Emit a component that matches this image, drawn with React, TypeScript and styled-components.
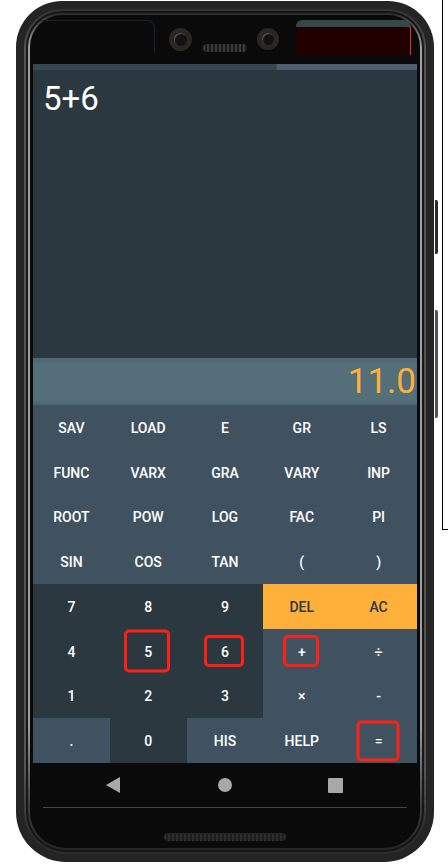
import styled, { createGlobalStyle } from 'styled-components';

const GlobalStyle = createGlobalStyle`
    html, body {
        margin: 0;
        padding: 0;
        background: #ffffff;
        overflow: hidden;
        font-family: Roboto, "Liberation Sans", sans-serif;
    }
`;

const Page = styled.div`
    position: relative;
    width: 448px;
    height: 864px;
    box-sizing: border-box;
    padding: 1px 14px 2px 16px;
`;

// thin black outline that sticks out on the right of the device
const PageEdge = styled.div`
    position: absolute;
    right: 0;
    top: 0;
    width: 5px;
    height: 529px;
    border-left: 1px solid #000;
    border-bottom: 1px solid #000;
`;

// the device frame: nested rings
const PhoneShell = styled.div`
    position: relative;
    height: 100%;
    box-sizing: border-box;
    padding: 8px;
    border-radius: 46px 46px 50px 50px;
    background: #242424;
`;

const SideButton = styled.div<{ $top: number; $height: number; $light?: boolean }>`
    position: absolute;
    right: -4px;
    top: ${p => p.$top}px;
    width: 3px;
    height: ${p => p.$height}px;
    border-radius: 0 2px 2px 0;
    background: ${p => (p.$light ? '#555555' : '#2c2c2c')};
`;

const Groove = styled.div`
    height: 100%;
    box-sizing: border-box;
    padding: 2px;
    border-radius: 38px 38px 42px 42px;
    background: linear-gradient(180deg, #333 0, #555 5%, #555 90%, #2c2c2c 98%);
`;

const GrooveInner = styled.div`
    height: 100%;
    box-sizing: border-box;
    padding: 2px;
    border-radius: 36px 36px 40px 40px;
    background: #161616;
`;

const BezelRing = styled.div`
    height: 100%;
    box-sizing: border-box;
    padding: 2px;
    border-radius: 34px 34px 38px 38px;
    background: linear-gradient(180deg, #2a2a2a 0, #a0a0a0 4%, #a0a0a0 85%, #3a3a3a 95%, #262626 100%);
`;

const Bezel = styled.div`
    position: relative;
    height: 100%;
    box-sizing: border-box;
    padding: 49px 3px 0;
    border-radius: 32px 32px 36px 36px;
    background: #0a0a0a;
    display: flex;
    flex-direction: column;
`;

const Notch = styled.div`
    position: absolute;
    top: 13px;
    left: 139px;
    width: 110px;
    display: flex;
    justify-content: space-between;
`;

const Camera = styled.div<{ $size: number }>`
    width: ${p => p.$size}px;
    height: ${p => p.$size}px;
    border-radius: 50%;
    display: flex;
    align-items: center;
    justify-content: center;
    background: #2a2722;
    &::after {
        content: '';
        width: 55%;
        height: 55%;
        border-radius: 50%;
        background: #121212;
        box-shadow: inset 1px 1px 1px #555;
    }
`;

const Earpiece = styled.div`
    width: 44px;
    height: 8px;
    margin-top: 16px;
    border-radius: 4px;
    background: repeating-linear-gradient(90deg, #3a3a3a 0 2px, #1b1b1b 2px 4px);
`;

// faint cut-out to the left of the notch
const LeftGhost = styled.div`
    position: absolute;
    top: 5px;
    left: 7px;
    width: 118px;
    height: 32px;
    box-sizing: border-box;
    border-top: 1px solid #1a2426;
    border-right: 1px solid #1a2230;
    border-radius: 6px 8px 0 0;
`;

// glitchy corner left over from the status bar
const StatusGhost = styled.div`
    position: absolute;
    top: 5px;
    right: 9px;
    width: 115px;
    height: 35px;
    box-sizing: border-box;
    border-top: 7px solid #36474a;
    border-right: 1px solid #e03030;
    border-radius: 6px 8px 0 0;
    background: #220000;
`;

const Screen = styled.div`
    width: 384px;
    height: 699px;
    display: flex;
    flex-direction: column;
`;

const ExpressionPane = styled.div`
    height: 294px;
    box-sizing: border-box;
    padding: 12px 10px;
    background:
        linear-gradient(90deg, #36474f 0, #36474f 243px, #4d5e70 244px) top / 100% 6px no-repeat,
        #2c3840;
    font-size: 33px;
    line-height: 45px;
    color: #ffffff;
`;

const ResultBar = styled.div`
    height: 47px;
    box-sizing: border-box;
    padding-right: 1px;
    display: flex;
    align-items: center;
    justify-content: flex-end;
    background: linear-gradient(180deg, #4f666f 0, #546e7a 15%, #546e7a 90%, #4d646e 100%);
    color: #ffb03a;
    font-size: 35px;
    font-weight: 400;
`;

const Keypad = styled.div`
    display: grid;
    grid-template-columns: repeat(5, 76.8px);
    grid-auto-rows: 44.75px;
`;

type Tone = 'slate' | 'dark' | 'amber';

const toneColors: Record<Tone, string> = {
    slate: '#405260',
    dark: '#2c3840',
    amber: '#ffb03a',
};

const Key = styled.div<{ $tone: Tone }>`
    position: relative;
    box-sizing: border-box;
    padding-top: 1px;
    display: flex;
    align-items: center;
    justify-content: center;
    background: ${p => toneColors[p.$tone]};
    color: ${p => (p.$tone === 'amber' ? '#2c3840' : '#ffffff')};
    font-size: 14px;
    font-weight: 500;
`;

// red annotation box round a pressed key
const Highlight = styled.span<{ $w: number; $h: number }>`
    position: absolute;
    left: 50%;
    top: 50%;
    width: ${p => p.$w}px;
    height: ${p => p.$h}px;
    box-sizing: border-box;
    transform: translate(-50%, -50%);
    margin-left: -1px;
    border: 3px solid #ff2015;
    border-radius: 5px;
`;

const NavBar = styled.div`
    height: 44px;
    display: flex;
    align-items: center;
    justify-content: space-between;
    padding: 0 74px 0 73px;
`;

const NavCircle = styled.div`
    width: 14px;
    height: 14px;
    margin-left: 1px;
    border-radius: 50%;
    background: #a8a8a8;
`;

const NavSquare = styled.div`
    width: 15px;
    height: 15px;
    border-radius: 1px;
    background: #a8a8a8;
`;

const ChinLine = styled.div`
    height: 1px;
    margin: 0 10px;
    background: #444444;
`;

const Speaker = styled.div`
    width: 122px;
    height: 8px;
    margin: 25px auto 0;
    border-radius: 4px;
    background: repeating-linear-gradient(90deg, #2b2b2b 0 2px, #1e1e1e 2px 4px);
`;

type KeyDef = { label: string; tone: Tone; mark?: [number, number] };

const sci = (label: string): KeyDef => ({ label, tone: 'slate' });
const num = (label: string, mark?: [number, number]): KeyDef => ({ label, tone: 'dark', mark });
const op = (label: string, mark?: [number, number]): KeyDef => ({ label, tone: 'slate', mark });

const keys: KeyDef[] = [
    ...['SAV', 'LOAD', 'E', 'GR', 'LS'].map(sci),
    ...['FUNC', 'VARX', 'GRA', 'VARY', 'INP'].map(sci),
    ...['ROOT', 'POW', 'LOG', 'FAC', 'PI'].map(sci),
    ...['SIN', 'COS', 'TAN', '(', ')'].map(sci),
    num('7'), num('8'), num('9'),
    { label: 'DEL', tone: 'amber' }, { label: 'AC', tone: 'amber' },
    num('4'), num('5', [46, 43]), num('6', [40, 32]), op('+', [36, 32]), op('÷'),
    num('1'), num('2'), num('3'), op('×'), op('-'),
    op('.'), num('0'), op('HIS'), op('HELP'), op('=', [43, 41]),
];

const App = () => {
    return (
        <Page>
            <GlobalStyle />
            <PageEdge />
            <PhoneShell>
                <SideButton $top={199} $height={54} />
                <SideButton $top={309} $height={108} $light />
                <Groove>
                    <GrooveInner>
                        <BezelRing>
                            <Bezel>
                                <LeftGhost />
                                <Notch>
                                    <Camera $size={23} />
                                    <Earpiece />
                                    <Camera $size={22} />
                                </Notch>
                                <StatusGhost />
                                <Screen>
                                    <ExpressionPane>5+6</ExpressionPane>
                                    <ResultBar>11.0</ResultBar>
                                    <Keypad>
                                        {keys.map(k => (
                                            <Key key={k.label} $tone={k.tone}>
                                                {k.label}
                                                {k.mark && <Highlight $w={k.mark[0]} $h={k.mark[1]} />}
                                            </Key>
                                        ))}
                                    </Keypad>
                                </Screen>
                                <NavBar>
                                    <svg width="14" height="16" viewBox="0 0 14 16">
                                        <path d="M14 0V16L0 8Z" fill="#a8a8a8" />
                                    </svg>
                                    <NavCircle />
                                    <NavSquare />
                                </NavBar>
                                <ChinLine />
                                <Speaker />
                            </Bezel>
                        </BezelRing>
                    </GrooveInner>
                </Groove>
            </PhoneShell>
        </Page>
    );
};

export default App;
